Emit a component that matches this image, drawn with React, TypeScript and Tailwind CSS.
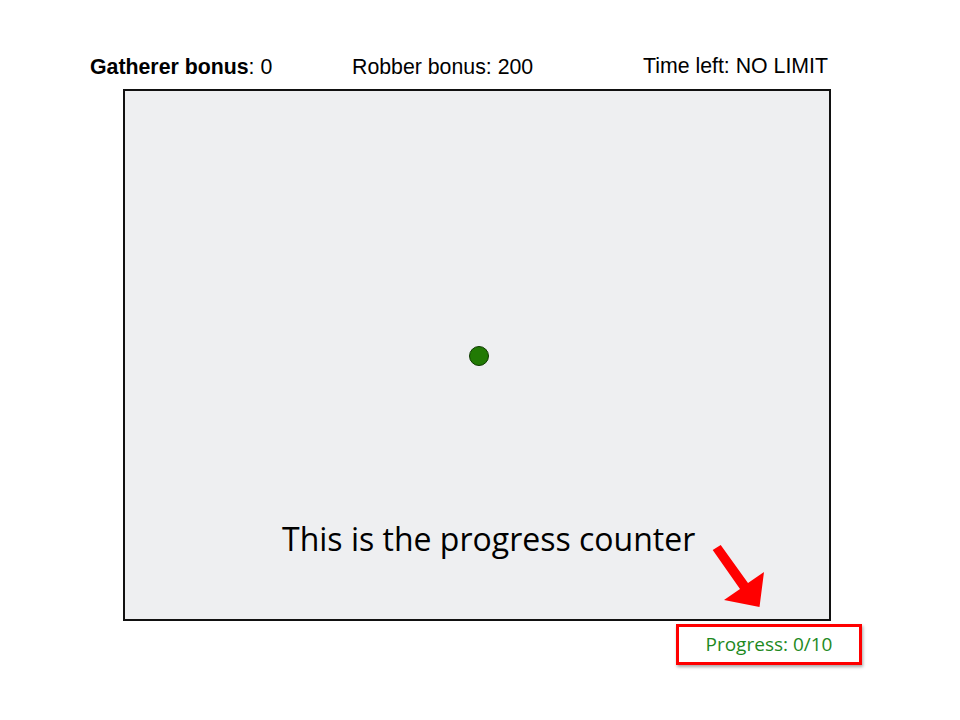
import React from "react";

export default function App() {
  return (
    <div className="w-[960px] h-[720px] bg-white relative overflow-hidden">
      <div className="pt-[55px] pl-[90px] w-[960px]">
        <div className="flex items-center w-[738px] h-[26px] text-[21.3px] text-black" style={{ fontFamily: '"Liberation Sans", Arial, sans-serif' }}>
          <div className="w-[262px]"><span className="font-bold">Gatherer bonus</span>: 0</div>
          <div className="flex-1">Robber bonus: 200</div>
          <div className="-mt-[3px]">Time left: NO LIMIT</div>
        </div>
      </div>
      <div className="ml-[123px] mt-[8px] w-[708px] h-[532px] border-2 border-[#111] bg-[#eeeff1] relative">
        <div className="absolute left-[344px] top-[255px] w-[20px] h-[20px] rounded-full bg-[#217a04] border border-[#0d3a00]" />
        <div className="absolute left-[157px] top-[432px] text-[32px] text-black leading-none whitespace-nowrap" style={{ fontFamily: '"Open Sans", sans-serif' }}>
          This is the progress counter
        </div>
      </div>
      <div className="flex justify-start pl-[676px] mt-[3px]">
        <div className="w-[186px] h-[41px] border-[3px] border-[#ff0000] bg-white flex items-center justify-center shadow-[1px_2px_3px_rgba(0,0,0,0.35)]">
          <span className="text-[19px] text-[#1e8a1e]" style={{ fontFamily: '"Open Sans", sans-serif' }}>Progress: 0/10</span>
        </div>
      </div>
      <svg className="absolute left-0 top-0 pointer-events-none" width="960" height="720" viewBox="0 0 960 720">
        <polygon points="712.7,550 720.7,545 748,583 764,572 759.5,607 724,600 740,589" fill="#ff0000" />
      </svg>
    </div>
  );
}
